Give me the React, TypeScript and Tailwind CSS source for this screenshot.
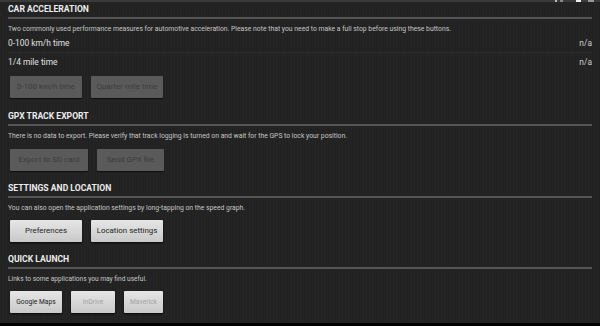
import React from "react";

type Btn = { label: string; w: string; kind: "off" | "on" | "dim" };

const btnClass = {
  off: "bg-[#5a5a5a] text-[#3c3c3c] shadow-[0_1px_1px_rgba(0,0,0,0.6)]",
  on: "bg-gradient-to-b from-[#e6e6e6] to-[#c9c9c9] text-[#1e1e1e] shadow-[0_1px_2px_rgba(0,0,0,0.8)]",
  dim: "bg-gradient-to-b from-[#e6e6e6] to-[#c9c9c9] text-[#a3a3a3] shadow-[0_1px_2px_rgba(0,0,0,0.8)]",
};

const Section = ({
  title,
  desc,
  children,
  small,
}: {
  title: string;
  desc: string;
  children: React.ReactNode;
  small?: boolean;
}) => (
  <div>
    <div className="h-[14px] leading-[14px] text-[8.6px] font-bold text-[#ececec] uppercase">{title}</div>
    <div className="h-[2px] mt-[1px] bg-[#555555]" />
    <div className={`mt-[5px] h-[10px] leading-[10px] text-[#c6c6c6] ${small ? "text-[6.6px]" : "text-[6.8px]"}`}>
      {desc}
    </div>
    {children}
  </div>
);

const Buttons = ({ items, small }: { items: Btn[]; small?: boolean }) => (
  <div className="flex gap-[9px] pl-[2px]">
    {items.map((b) => (
      <div
        key={b.label}
        className={`h-[22px] flex items-center justify-center rounded-[1px] ${small ? "text-[6.7px]" : "text-[7.9px]"} ${btnClass[b.kind]} ${b.w}`}
      >
        {b.label}
      </div>
    ))}
  </div>
);

export default function App() {
  return (
    <div
      className="w-[600px] h-[326px] overflow-hidden flex flex-col bg-[#222222] bg-[repeating-linear-gradient(90deg,rgba(255,255,255,0.015)_0px,rgba(255,255,255,0.015)_1px,transparent_1px,transparent_3px)] text-white"
      style={{ fontFamily: "Roboto, 'Noto Sans', sans-serif" }}
    >
      {/* status strip */}
      <div className="h-[2px] bg-[#3a3a3a] flex justify-end gap-[3px] pr-[6px] shrink-0">
        <div className="w-[2px] bg-[#bbb]" />
        <div className="w-[3px] bg-[#888]" />
        <div className="w-[5px] bg-[#eee] ml-[10px]" />
        <div className="w-[6px] bg-[#999] ml-[4px]" />
      </div>

      <div className="flex-1 px-[8px]">
        <Section
          title="Car acceleration"
          desc="Two commonly used performance measures for automotive acceleration. Please note that you need to make a full stop before using these buttons."
        >
          <div className="mt-[1px] h-[18px] flex items-center justify-between text-[8.4px] text-[#e0e0e0] border-b border-[#2e2e2e]">
            <span>0-100 km/h time</span>
            <span className="text-[#d0d0d0]">n/a</span>
          </div>
          <div className="h-[18px] flex items-center justify-between text-[8.4px] text-[#e0e0e0]">
            <span>1/4 mile time</span>
            <span className="text-[#d0d0d0]">n/a</span>
          </div>
          <div className="mt-[5px]">
            <Buttons
              items={[
                { label: "0-100 km/h time", w: "w-[72px]", kind: "off" },
                { label: "Quarter mile time", w: "w-[72px]", kind: "off" },
              ]}
            />
          </div>
        </Section>

        <div className="mt-[11px]">
          <Section
            title="GPX track export"
            desc="There is no data to export. Please verify that track logging is turned on and wait for the GPS to lock your position."
          >
            <div className="mt-[8px]">
              <Buttons
                items={[
                  { label: "Export to SD card", w: "w-[78px]", kind: "off" },
                  { label: "Send GPX file", w: "w-[67px]", kind: "off" },
                ]}
              />
            </div>
          </Section>
        </div>

        <div className="mt-[10px]">
          <Section
            title="Settings and location"
            desc="You can also open the application settings by long-tapping on the speed graph."
          >
            <div className="mt-[7px]">
              <Buttons
                items={[
                  { label: "Preferences", w: "w-[72px]", kind: "on" },
                  { label: "Location settings", w: "w-[72px]", kind: "on" },
                ]}
              />
            </div>
          </Section>
        </div>

        <div className="mt-[10px]">
          <Section title="Quick launch" desc="Links to some applications you may find useful." small>
            <div className="mt-[7px]">
              <Buttons
                small
                items={[
                  { label: "Google Maps", w: "w-[52px]", kind: "on" },
                  { label: "InDrive", w: "w-[44px]", kind: "dim" },
                  { label: "Maverick", w: "w-[39px]", kind: "dim" },
                ]}
              />
            </div>
          </Section>
        </div>
      </div>

      <div className="h-[3px] bg-black shrink-0" />
    </div>
  );
}
